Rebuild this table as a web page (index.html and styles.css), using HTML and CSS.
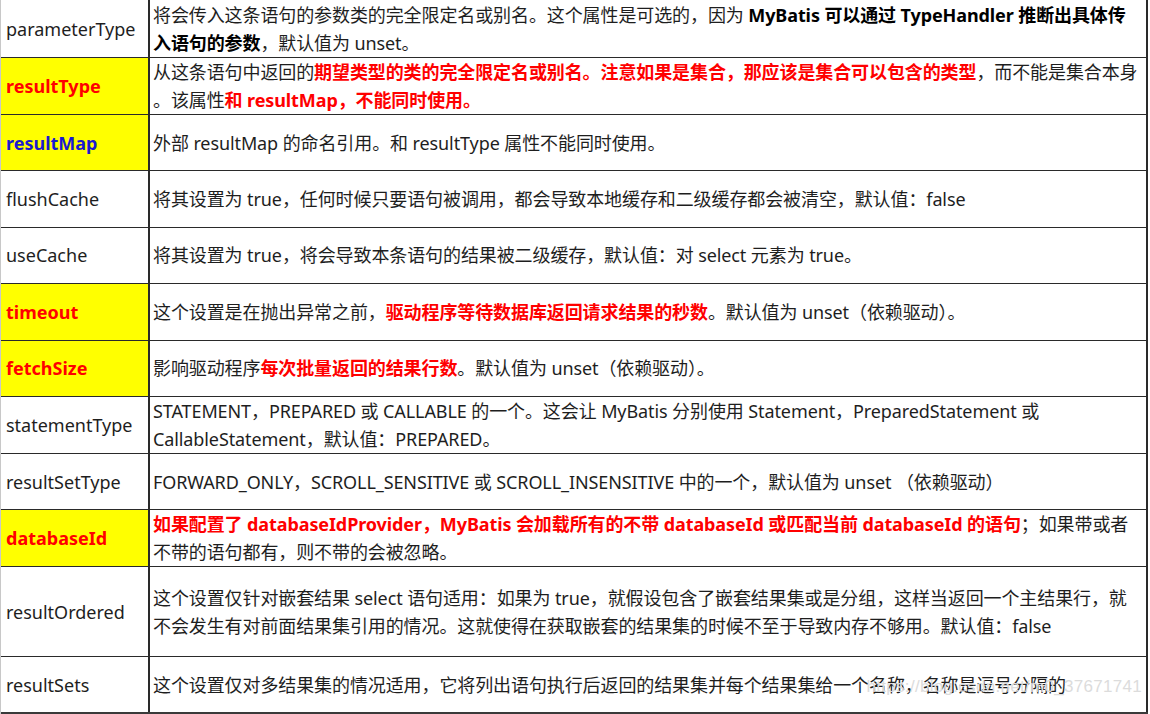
FILE: index.html
```html
<!DOCTYPE html>
<html lang="zh">
<head>
<meta charset="utf-8">
<title>MyBatis select 属性</title>
<link rel="stylesheet" href="styles.css">
</head>
<body>
<div class="page">
<table class="attrs">
  <colgroup><col class="c-name"><col class="c-desc"></colgroup>
  <tr class="first">
    <td class="name">parameterType</td>
    <td class="desc">将会传入这条语句的参数类的完全限定名或别名。这个属性是可选的，因为 <b class="k">MyBatis 可以通过 TypeHandler 推断出具体传<br>入语句的参数</b>，默认值为 unset。</td>
  </tr>
  <tr>
    <td class="name hl red">resultType</td>
    <td class="desc">从这条语句中返回的<b class="r">期望类型的类的完全限定名或别名。注意如果是集合，那应该是集合可以包含的类型</b>，而不能是集合本身<br>。该属性<b class="r">和 resultMap，不能同时使用。</b></td>
  </tr>
  <tr>
    <td class="name hl blue">resultMap</td>
    <td class="desc">外部 resultMap 的命名引用。和 resultType 属性不能同时使用。</td>
  </tr>
  <tr>
    <td class="name">flushCache</td>
    <td class="desc">将其设置为 true，任何时候只要语句被调用，都会导致本地缓存和二级缓存都会被清空，默认值：false</td>
  </tr>
  <tr>
    <td class="name">useCache</td>
    <td class="desc">将其设置为 true，将会导致本条语句的结果被二级缓存，默认值：对 select 元素为 true。</td>
  </tr>
  <tr>
    <td class="name hl red">timeout</td>
    <td class="desc">这个设置是在抛出异常之前，<b class="r">驱动程序等待数据库返回请求结果的秒数</b>。默认值为 unset（依赖驱动）。</td>
  </tr>
  <tr>
    <td class="name hl red">fetchSize</td>
    <td class="desc">影响驱动程序<b class="r">每次批量返回的结果行数</b>。默认值为 unset（依赖驱动）。</td>
  </tr>
  <tr>
    <td class="name">statementType</td>
    <td class="desc">STATEMENT，PREPARED 或 CALLABLE 的一个。这会让 MyBatis 分别使用 Statement，PreparedStatement 或<br>CallableStatement，默认值：PREPARED。</td>
  </tr>
  <tr>
    <td class="name">resultSetType</td>
    <td class="desc">FORWARD_ONLY，SCROLL_SENSITIVE 或 SCROLL_INSENSITIVE 中的一个，默认值为 unset （依赖驱动）</td>
  </tr>
  <tr>
    <td class="name hl red">databaseId</td>
    <td class="desc"><b class="r">如果配置了 databaseIdProvider，MyBatis 会加载所有的不带 databaseId 或匹配当前 databaseId 的语句</b>；如果带或者<br>不带的语句都有，则不带的会被忽略。</td>
  </tr>
  <tr class="tall">
    <td class="name">resultOrdered</td>
    <td class="desc">这个设置仅针对嵌套结果 select 语句适用：如果为 true，就假设包含了嵌套结果集或是分组，这样当返回一个主结果行，就<br>不会发生有对前面结果集引用的情况。这就使得在获取嵌套的结果集的时候不至于导致内存不够用。默认值：false</td>
  </tr>
  <tr>
    <td class="name">resultSets</td>
    <td class="desc">这个设置仅对多结果集的情况适用，它将列出语句执行后返回的结果集并每个结果集给一个名称，名称是逗号分隔的</td>
  </tr>
</table>
<div class="watermark">https://blog.csdn.net/m0_37671741</div>
</div>
</body>
</html>
```

FILE: styles.css
```css
html, body {
  margin: 0;
  padding: 0;
  background: #ffffff;
}
body {
  width: 1150px;
  height: 714px;
  overflow: hidden;
}
.page {
  position: relative;
  width: 1150px;
  height: 714px;
  overflow: hidden;
  border-left: 1px solid #c8c8c8;
  box-sizing: border-box;
}
.attrs {
  border-collapse: collapse;
  table-layout: fixed;
  width: 1147px;
  margin-top: -10px;
  font-family: "Noto Sans", "Noto Sans CJK SC", sans-serif;
  font-size: 18px;
  line-height: 28px;
  color: #1e1e1e;
}
.c-name { width: 148px; }
.attrs tr { height: 56.4px; }
.attrs tr.first { height: 67px; }
.attrs tr.tall { height: 90px; }
.attrs td {
  border: 1px solid #2a2a2a;
  vertical-align: middle;
  padding: 0 4px;
  white-space: nowrap;
  overflow: hidden;
}
.attrs tr.first td { padding-top: 10px; }
.attrs td.name {
  border-left: none;
  padding-left: 5px;
  border-right: 2px solid #2a2a2a;
}
.attrs td.desc {
  padding-left: 3px;
  padding-right: 2px;
  letter-spacing: -0.1px;
  border-right: 2px solid #2a2a2a;
}
.attrs tr:last-child td { border-bottom: 2px solid #3a3a3a; }
.hl { background: #ffff00; }
.name.red { color: #ff0000; font-weight: bold; }
.name.blue { color: #1a1ad0; font-weight: bold; }
b.k { color: #000; font-weight: bold; }
b.r { color: #ff0000; font-weight: bold; }
.watermark {
  position: absolute;
  right: 8px;
  bottom: 17px;
  font-family: "Liberation Sans", Arial, sans-serif;
  font-size: 17px;
  color: #dcdcdc;
  letter-spacing: 0.3px;
}
```
